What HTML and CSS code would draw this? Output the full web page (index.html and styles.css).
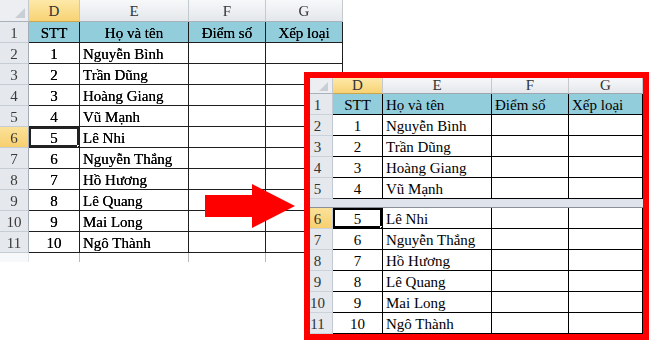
FILE: index.html
```html
<!DOCTYPE html>
<html lang="vi">
<head>
<meta charset="utf-8">
<title>Split sheet</title>
<link rel="stylesheet" href="styles.css">
</head>
<body>
<div class="page">
  <div class="sheet sheet-left">
    <div class="cell corner"><span class="tri"></span></div>
    <div class="cell ch active">D</div>
    <div class="cell ch">E</div>
    <div class="cell ch">F</div>
    <div class="cell ch">G</div>

    <div class="cell rh">1</div>
    <div class="cell blue mid">STT</div>
    <div class="cell blue mid">Họ và tên</div>
    <div class="cell blue mid">Điểm số</div>
    <div class="cell blue mid">Xếp loại</div>

    <div class="cell rh">2</div><div class="cell mid">1</div><div class="cell name">Nguyễn Bình</div><div class="cell"></div><div class="cell"></div>
    <div class="cell rh">3</div><div class="cell mid">2</div><div class="cell name">Trần Dũng</div><div class="cell"></div><div class="cell"></div>
    <div class="cell rh">4</div><div class="cell mid">3</div><div class="cell name">Hoàng Giang</div><div class="cell"></div><div class="cell"></div>
    <div class="cell rh">5</div><div class="cell mid">4</div><div class="cell name">Vũ Mạnh</div><div class="cell"></div><div class="cell"></div>
    <div class="cell rh active">6</div><div class="cell mid sel">5</div><div class="cell name">Lê Nhi</div><div class="cell"></div><div class="cell"></div>
    <div class="cell rh">7</div><div class="cell mid">6</div><div class="cell name">Nguyễn Thắng</div><div class="cell"></div><div class="cell"></div>
    <div class="cell rh">8</div><div class="cell mid">7</div><div class="cell name">Hồ Hương</div><div class="cell"></div><div class="cell"></div>
    <div class="cell rh">9</div><div class="cell mid">8</div><div class="cell name">Lê Quang</div><div class="cell"></div><div class="cell"></div>
    <div class="cell rh">10</div><div class="cell mid">9</div><div class="cell name">Mai Long</div><div class="cell"></div><div class="cell"></div>
    <div class="cell rh">11</div><div class="cell mid">10</div><div class="cell name">Ngô Thành</div><div class="cell"></div><div class="cell"></div>

    <div class="cell rh fade"></div><div class="cell fade"></div><div class="cell fade"></div><div class="cell fade"></div><div class="cell fade"></div>
  </div>

  <svg class="arrow" width="90" height="44" viewBox="0 0 90 44" aria-hidden="true">
    <polygon points="0,11 47,11 47,0 90,22 47,44 47,33 0,33" fill="#ff0000"/>
  </svg>

  <div class="zoom-frame">
    <div class="sheet sheet-right">
      <div class="cell corner"><span class="tri"></span></div>
      <div class="cell ch active">D</div>
      <div class="cell ch">E</div>
      <div class="cell ch">F</div>
      <div class="cell ch">G</div>

      <div class="cell rh">1</div>
      <div class="cell blue mid">STT</div>
      <div class="cell blue name">Họ và tên</div>
      <div class="cell blue name">Điểm số</div>
      <div class="cell blue name">Xếp loại</div>

      <div class="cell rh">2</div><div class="cell mid">1</div><div class="cell name">Nguyễn Bình</div><div class="cell"></div><div class="cell"></div>
      <div class="cell rh">3</div><div class="cell mid">2</div><div class="cell name">Trần Dũng</div><div class="cell"></div><div class="cell"></div>
      <div class="cell rh">4</div><div class="cell mid">3</div><div class="cell name">Hoàng Giang</div><div class="cell"></div><div class="cell"></div>
      <div class="cell rh">5</div><div class="cell mid">4</div><div class="cell name">Vũ Mạnh</div><div class="cell"></div><div class="cell"></div>

      <div class="split"></div>

      <div class="cell rh active">6</div><div class="cell mid sel">5</div><div class="cell name">Lê Nhi</div><div class="cell"></div><div class="cell"></div>
      <div class="cell rh">7</div><div class="cell mid">6</div><div class="cell name">Nguyễn Thắng</div><div class="cell"></div><div class="cell"></div>
      <div class="cell rh">8</div><div class="cell mid">7</div><div class="cell name">Hồ Hương</div><div class="cell"></div><div class="cell"></div>
      <div class="cell rh">9</div><div class="cell mid">8</div><div class="cell name">Lê Quang</div><div class="cell"></div><div class="cell"></div>
      <div class="cell rh">10</div><div class="cell mid">9</div><div class="cell name">Mai Long</div><div class="cell"></div><div class="cell"></div>
      <div class="cell rh">11</div><div class="cell mid">10</div><div class="cell name">Ngô Thành</div><div class="cell"></div><div class="cell"></div>
    </div>
  </div>
</div>
</body>
</html>
```

FILE: styles.css
```css
html, body {
  margin: 0;
  padding: 0;
  background: #ffffff;
}

.page {
  position: relative;
  width: 650px;
  height: 340px;
  overflow: hidden;
  font-family: "Liberation Serif", "Times New Roman", serif;
}

.sheet {
  display: grid;
  font-size: 15px;
  color: #111;
}

.sheet-left {
  width: 343px;
  grid-template-columns: 29px 51px 109px 77px 77px;
  grid-template-rows: 22px repeat(11, 21px) 9px;
  filter: blur(0.45px);
  color: #000;
  text-shadow: 0 0 0.4px #000;
}

.sheet-right {
  grid-template-columns: 23px 50px 109px 77px 74px;
  grid-template-rows: 16px repeat(5, 21px) 9px repeat(6, 21px);
  color: #000;
}

.cell {
  box-sizing: border-box;
  border-right: 1px solid #1e1e1e;
  border-bottom: 1px solid #1e1e1e;
  background: #fff;
  white-space: nowrap;
  overflow: hidden;
  display: flex;
  align-items: center;
  line-height: 1;
  padding-top: 2px;
}

.sheet-right .cell {
  border-color: #000;
  padding-top: 2px;
}

.mid {
  justify-content: center;
}

.name {
  justify-content: flex-start;
  padding-left: 3px;
}

.blue {
  background: #92cddc;
}

.corner {
  position: relative;
  background: #eceef1;
  border-right: 1px solid #c4c9d0;
  border-bottom: 1px solid #a9b1bb;
}

.sheet-right .corner {
  border-right-color: #c4c9d0;
  border-bottom-color: #a9b1bb;
}

.tri {
  position: absolute;
  right: 3px;
  bottom: 3px;
  width: 0;
  height: 0;
  border-left: 10px solid transparent;
  border-bottom: 10px solid #c9ced5;
}

.sheet-right .tri {
  right: 4px;
  bottom: 2px;
  border-left-width: 9px;
  border-bottom-width: 9px;
}

.ch {
  justify-content: center;
  background: linear-gradient(#f7f8fa, #e4e7eb);
  border-right: 1px solid #c4c9d0;
  border-bottom: 1px solid #a9b1bb;
  color: #333;
  text-shadow: none;
}

.sheet-right .ch {
  border-right-color: #c4c9d0;
  border-bottom-color: #9ea6b0;
  padding-top: 0;
}

.ch.active {
  background: linear-gradient(#fde9a8, #f8d274);
  border-bottom-color: #c9a54e;
}

.sheet-right .ch.active {
  border-bottom-color: #c9a54e;
}

.rh {
  justify-content: center;
  background: #e5e8ed;
  border-right: 1px solid #a3acb7;
  border-bottom: 1px solid #c6ccd4;
  color: #3a3a3a;
  text-shadow: none;
}

.sheet-right .rh {
  border-right-color: #c3c9d2;
  border-bottom-color: #ccd2da;
  padding-right: 7px;
  color: #333;
}

.rh.active {
  background: linear-gradient(#fbe199, #f7d06f);
}

.sel {
  position: relative;
  z-index: 1;
  box-shadow: inset 0 0 0 2px #222;
}

.sheet-right .sel {
  box-shadow: inset 0 0 0 2px #000;
}

.sel::after {
  content: "";
  position: absolute;
  right: -3px;
  bottom: -3px;
  width: 5px;
  height: 5px;
  background: #000;
  border: 1px solid #fff;
  box-sizing: border-box;
}

.fade {
  opacity: 0.3;
  border-bottom: none;
}

.split {
  grid-column: 1 / -1;
  background: #dfe3eb;
  border-bottom: 1px solid #8a8f96;
  box-sizing: border-box;
}

.arrow {
  position: absolute;
  left: 205px;
  top: 184px;
}

.zoom-frame {
  position: absolute;
  left: 304px;
  top: 72px;
  width: 345px;
  height: 268px;
  box-sizing: border-box;
  border: 6px solid #ff0000;
  background: #fff;
  overflow: hidden;
}
```
